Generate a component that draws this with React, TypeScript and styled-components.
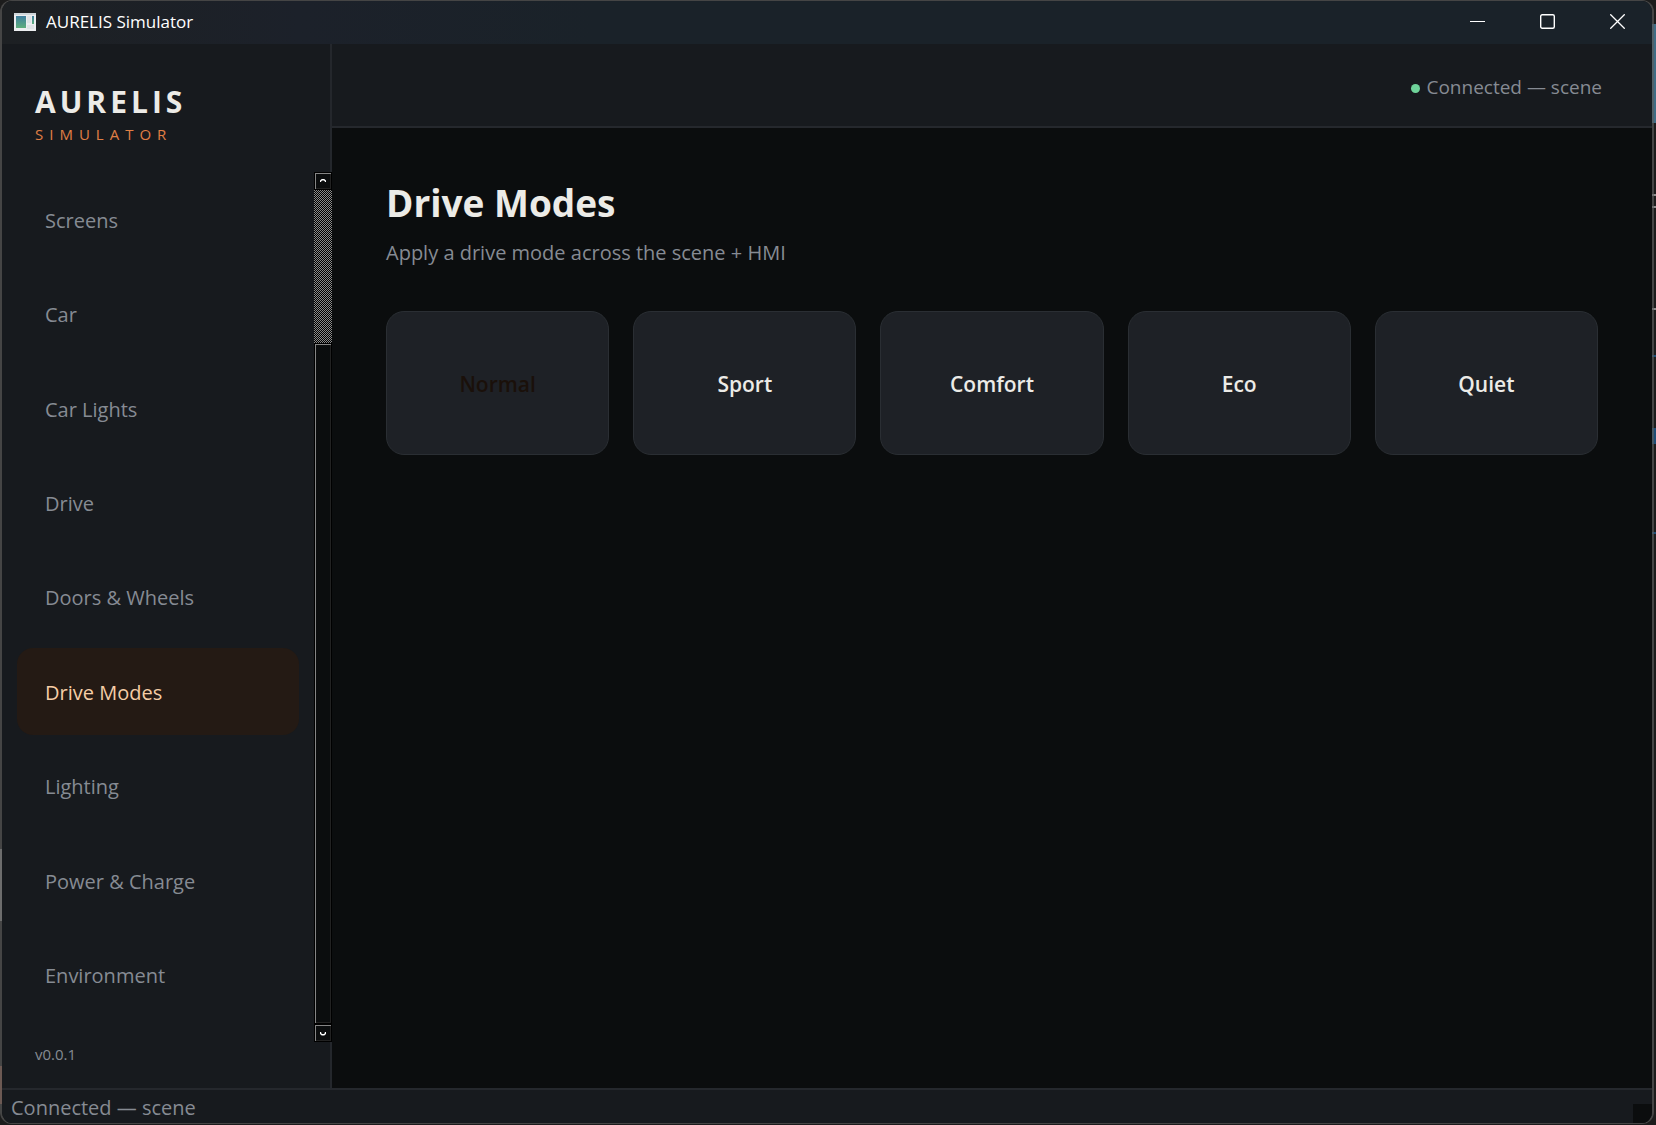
import React, { useState } from "react";
import styled, { createGlobalStyle } from "styled-components";

const GlobalStyle = createGlobalStyle`
  *, *::before, *::after { box-sizing: border-box; }
  body {
    margin: 0;
    background: #1c1c1c;
    font-family: "Segoe UI", "Open Sans", "Noto Sans", sans-serif;
  }
  button {
    margin: 0;
    padding: 0;
    border: 0;
    background: none;
    font: inherit;
    color: inherit;
    cursor: pointer;
  }
  h1, h2, p { margin: 0; }
`;

const Desktop = styled.div`
  display: flex;
  height: 100vh;
  padding: 0 2px 1px 0;
  background:
    linear-gradient(#3f6c84, #3f6c84) right 24px / 4px 99px no-repeat,
    linear-gradient(#1f4d75, #1f4d75) right 355px / 4px 2px no-repeat,
    linear-gradient(#1f4d75, #1f4d75) right 428px / 4px 16px no-repeat,
    linear-gradient(#1f4d75, #1f4d75) right 532px / 4px 2px no-repeat,
    linear-gradient(#8c8c8c, #8c8c8c) right 194px / 4px 2px no-repeat,
    linear-gradient(#8c8c8c, #8c8c8c) right 206px / 4px 2px no-repeat,
    linear-gradient(#8c8c8c, #8c8c8c) right 308px / 4px 2px no-repeat,
    linear-gradient(#8c8c8c, #8c8c8c) left 849px / 2px 72px no-repeat,
    linear-gradient(#8a5542, #8a5542) left 1066px / 2px 38px no-repeat,
    #1c1c1c;
`;

const Window = styled.div`
  flex: 1;
  min-width: 0;
  display: flex;
  flex-direction: column;
  border: 2px solid rgba(92, 92, 92, 0.65);
  border-width: 1px 2px;
  border-radius: 12px;
  background: #0b0d0e;
  background-clip: padding-box;
  overflow: hidden;
`;

const TitleBar = styled.header`
  flex: none;
  display: flex;
  align-items: center;
  height: 43px;
  padding: 0 0 2px 12px;
  background: linear-gradient(90deg, #1d2023, #1c212a 18%, #1a2229 36%, #1a2229);
  color: #ffffff;
`;

const WindowTitle = styled.span`
  flex: 1;
  margin-left: 10px;
  font-size: 17px;
  line-height: 24px;
`;

const CaptionButton = styled.button`
  display: grid;
  place-items: center;
  width: 70px;
  height: 41px;
`;

const Body = styled.div`
  flex: 1;
  min-height: 0;
  display: flex;
`;

const Sidebar = styled.aside`
  flex: none;
  display: flex;
  flex-direction: column;
  width: 330px;
  background: #171a1e;
  box-shadow: inset -2px 0 #24272c;
`;

const Brand = styled.div`
  flex: none;
  height: 128px;
  padding: 38px 33px 0;
`;

const BrandName = styled.p`
  font-size: 30px;
  line-height: 40px;
  font-weight: 700;
  letter-spacing: 4px;
  color: #ecebe7;
`;

const BrandSub = styled.p`
  font-size: 15px;
  line-height: 24px;
  letter-spacing: 6px;
  color: #e07f45;
`;

const ScrollArea = styled.div`
  flex: 1;
  min-height: 0;
  display: flex;
`;

const Nav = styled.nav`
  flex: 1;
  display: flex;
  flex-direction: column;
  gap: 8px;
  padding: 4px 15px 24px;
`;

const NavItem = styled.button<{ $active: boolean }>`
  flex: 1;
  padding: 3px 28px 0;
  border-radius: 16px;
  text-align: left;
  font-size: 20px;
  line-height: 28px;
  background: ${(p) => (p.$active ? "#241a14" : "transparent")};
  color: ${(p) => (p.$active ? "#f5cda6" : "#868b93")};
`;

const ScrollBar = styled.div`
  flex: none;
  display: flex;
  flex-direction: column;
  width: 18px;
  background: #000000;
`;

const ScrollButton = styled.button`
  display: grid;
  place-items: center;
  height: 18px;
  border: 1px solid #000000;
  box-shadow: inset 1px 1px #858585, inset -1px -1px #222222;
  background: #0b0d0e;
`;

const ScrollThumb = styled.div`
  height: 153px;
  background: repeating-conic-gradient(#000000 0 25%, #8a8a8a 0 50%) 0 0 / 2px 2px;
`;

const ScrollTrack = styled.div`
  flex: 1;
  border: 1px solid #000000;
  box-shadow: inset 1px 1px #858585, inset -1px -1px #222222;
  background: #0b0d0e;
`;

const Version = styled.p`
  flex: none;
  height: 46px;
  padding: 0 33px;
  font-size: 15px;
  line-height: 24px;
  color: #868b93;
`;

const Content = styled.div`
  flex: 1;
  min-width: 0;
  display: flex;
  flex-direction: column;
`;

const TopBar = styled.div`
  flex: none;
  display: flex;
  align-items: center;
  justify-content: flex-end;
  gap: 6px;
  height: 84px;
  padding: 4px 50px 0;
  border-bottom: 2px solid #25282d;
  background: #171a1e;
  font-size: 19px;
  line-height: 28px;
  color: #868b93;
`;

const Dot = styled.span`
  width: 9px;
  height: 9px;
  margin-top: 2px;
  border-radius: 50%;
  background: #6fd39a;
`;

const Main = styled.main`
  flex: 1;
  padding: 47px 54px;
`;

const PageTitle = styled.h1`
  font-size: 37px;
  line-height: 56px;
  font-weight: 700;
  color: #ecebe7;
`;

const PageText = styled.p`
  margin-top: 8px;
  font-size: 20px;
  line-height: 28px;
  color: #868b93;
`;

const ModeGrid = styled.div`
  display: grid;
  grid-template-columns: repeat(5, 1fr);
  gap: 24px;
  margin-top: 44px;
`;

const ModeButton = styled.button<{ $active: boolean }>`
  height: 144px;
  padding-top: 2px;
  border: 1px solid #2a2e33;
  border-radius: 18px;
  background: #1e2126;
  font-size: 21px;
  line-height: 28px;
  font-weight: 600;
  color: ${(p) => (p.$active ? "#1a100a" : "#ecebe7")};
`;

const StatusBar = styled.footer`
  flex: none;
  display: flex;
  justify-content: space-between;
  height: 35px;
  padding-left: 9px;
  border-top: 2px solid #25282d;
  background: #171a1e;
  font-size: 20px;
  line-height: 36px;
  color: #868b93;
`;

const SizeGrip = styled.span`
  align-self: flex-end;
  width: 19px;
  height: 19px;
  background: #0b0d0e;
`;

const screens = [
  "Screens",
  "Car",
  "Car Lights",
  "Drive",
  "Doors & Wheels",
  "Drive Modes",
  "Lighting",
  "Power & Charge",
  "Environment",
];

const modes = ["Normal", "Sport", "Comfort", "Eco", "Quiet"];

function AppIcon() {
  return (
    <svg width="22" height="18" viewBox="0 0 22 18" aria-hidden="true">
      <defs>
        <linearGradient id="pane" x1="0" y1="0" x2="0" y2="1">
          <stop offset="0" stopColor="#3f7fa0" />
          <stop offset="1" stopColor="#5fae7c" />
        </linearGradient>
      </defs>
      <rect width="22" height="18" fill="#eceef0" />
      <rect width="22" height="2" fill="#cfd6da" />
      <rect x="2" y="3" width="10" height="12" fill="url(#pane)" />
      <rect x="13" y="3" width="4" height="7" fill="#dfe3e6" />
      <rect x="18" y="3" width="2" height="8" fill="url(#pane)" />
      <rect x="13" y="12" width="7" height="4" fill="#dfe3e6" />
    </svg>
  );
}

export default function App() {
  const [screen, setScreen] = useState("Drive Modes");
  const [mode, setMode] = useState("Normal");

  return (
    <>
      <GlobalStyle />
      <Desktop>
        <Window>
          <TitleBar>
            <AppIcon />
            <WindowTitle>AURELIS Simulator</WindowTitle>
            <CaptionButton aria-label="Minimize">
              <svg width="15" height="15" viewBox="0 0 15 15" stroke="#fff" fill="none">
                <path d="M0 7.5H15" />
              </svg>
            </CaptionButton>
            <CaptionButton aria-label="Maximize">
              <svg width="15" height="15" viewBox="0 0 15 15" stroke="#fff" fill="none">
                <rect x="0.7" y="0.7" width="13.6" height="13.6" rx="1.5" strokeWidth="1.4" />
              </svg>
            </CaptionButton>
            <CaptionButton aria-label="Close">
              <svg width="15" height="15" viewBox="0 0 15 15" stroke="#fff" fill="none">
                <path d="M0.3 0.3L14.7 14.7M14.7 0.3L0.3 14.7" strokeWidth="1.3" />
              </svg>
            </CaptionButton>
          </TitleBar>
          <Body>
            <Sidebar>
              <Brand>
                <BrandName>AURELIS</BrandName>
                <BrandSub>SIMULATOR</BrandSub>
              </Brand>
              <ScrollArea>
                <Nav>
                  {screens.map((name) => (
                    <NavItem key={name} $active={name === screen} onClick={() => setScreen(name)}>
                      {name}
                    </NavItem>
                  ))}
                </Nav>
                <ScrollBar>
                  <ScrollButton aria-label="Scroll up">
                    <svg width="6" height="5" viewBox="0 0 6 5" fill="none" stroke="#fff" strokeWidth="1.4">
                      <path d="M0.5 3V2L2 0.8H4L5.5 2V3" />
                    </svg>
                  </ScrollButton>
                  <ScrollThumb />
                  <ScrollTrack />
                  <ScrollButton aria-label="Scroll down">
                    <svg width="6" height="5" viewBox="0 0 6 5" fill="none" stroke="#fff" strokeWidth="1.4">
                      <path d="M0.5 1V2.4L2 3.8H4L5.5 2.4V1" />
                    </svg>
                  </ScrollButton>
                </ScrollBar>
              </ScrollArea>
              <Version>v0.0.1</Version>
            </Sidebar>
            <Content>
              <TopBar>
                <Dot />
                <span>Connected — scene</span>
              </TopBar>
              <Main>
                <PageTitle>Drive Modes</PageTitle>
                <PageText>Apply a drive mode across the scene + HMI</PageText>
                <ModeGrid>
                  {modes.map((name) => (
                    <ModeButton key={name} $active={name === mode} onClick={() => setMode(name)}>
                      {name}
                    </ModeButton>
                  ))}
                </ModeGrid>
              </Main>
            </Content>
          </Body>
          <StatusBar>
            <span>Connected — scene</span>
            <SizeGrip />
          </StatusBar>
        </Window>
      </Desktop>
    </>
  );
}
